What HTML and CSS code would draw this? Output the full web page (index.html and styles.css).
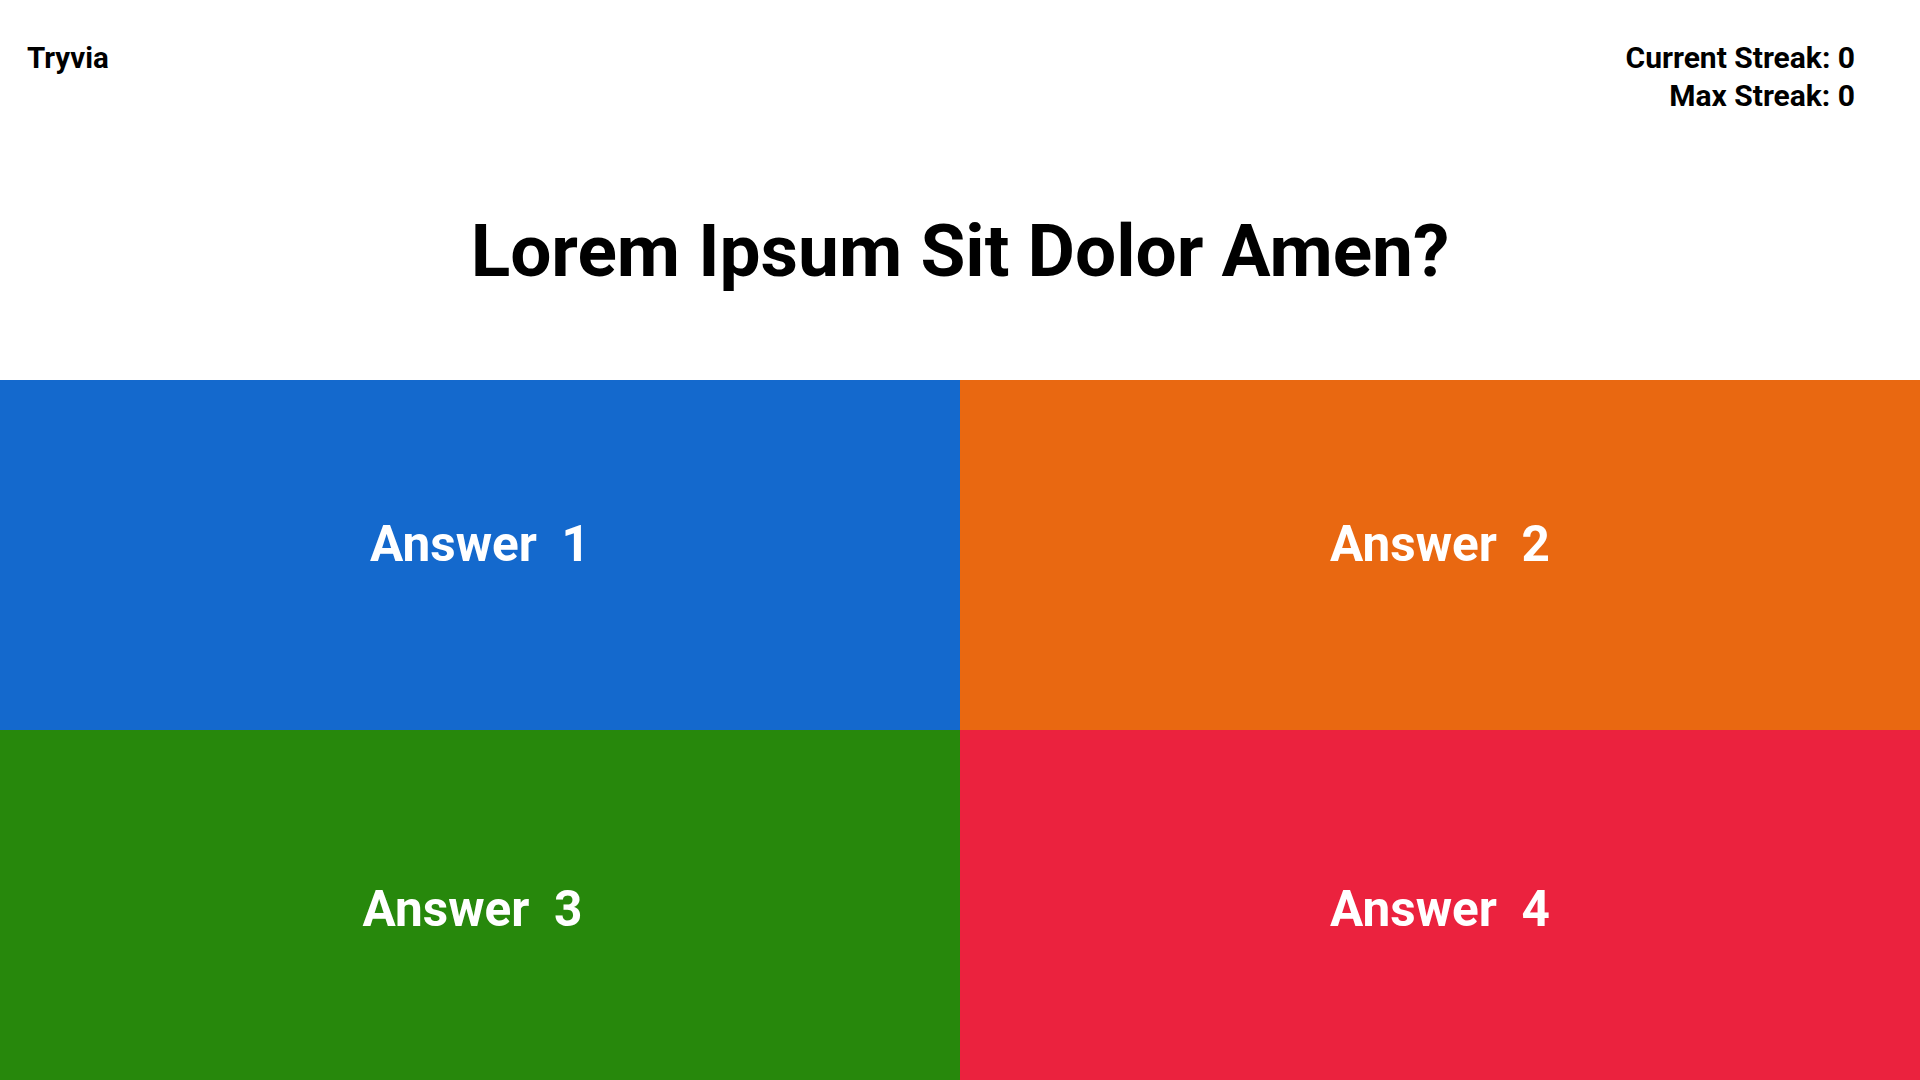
FILE: index.html
```html
<!DOCTYPE html>
<html lang="en">
<head>
<meta charset="utf-8">
<title>Tryvia</title>
<link rel="stylesheet" href="styles.css">
</head>
<body>
<div class="top">
  <header class="header">
    <div class="brand">Tryvia</div>
    <div class="streaks">
      <div class="streak">Current Streak: 0</div>
      <div class="streak">Max Streak: 0</div>
    </div>
  </header>
  <h1 class="question">Lorem Ipsum Sit Dolor Amen?</h1>
</div>
<main class="answers">
  <button class="answer answer-blue row-top">Answer  1</button>
  <button class="answer answer-orange row-top">Answer  2</button>
  <button class="answer answer-green row-bottom shift-left">Answer  3</button>
  <button class="answer answer-red row-bottom">Answer  4</button>
</main>
</body>
</html>
```
FILE: styles.css
```css
html, body {
  margin: 0;
  padding: 0;
  width: 1920px;
  height: 1080px;
  overflow: hidden;
  background: #ffffff;
  font-family: Roboto, "Liberation Sans", Arial, sans-serif;
  color: #000000;
}

.top {
  height: 380px;
  display: flex;
  flex-direction: column;
}

.header {
  display: flex;
  justify-content: space-between;
  align-items: flex-start;
  padding: 39px 65px 0 27px;
}

.brand {
  font-size: 29.5px;
  font-weight: 700;
  line-height: 38px;
}

.streaks {
  text-align: right;
  font-size: 30px;
  font-weight: 700;
  line-height: 38px;
}

.question {
  margin: 93px 0 0;
  text-align: center;
  font-size: 73px;
  font-weight: 700;
  line-height: normal;
}

.answers {
  display: grid;
  grid-template-columns: 1fr 1fr;
  grid-template-rows: 350px 350px;
}

.answer {
  border: none;
  margin: 0;
  display: flex;
  align-items: center;
  justify-content: center;
  font-family: Roboto, "Liberation Sans", Arial, sans-serif;
  font-size: 49.5px;
  font-weight: 700;
  color: #ffffff;
  white-space: pre;
  line-height: normal;
  cursor: pointer;
  padding: 0;
}

.row-top {
  padding-bottom: 23px;
}

.row-bottom {
  padding-top: 7px;
}

.shift-left {
  padding-right: 15px;
}

.answer-blue { background: #1469cd; }
.answer-orange { background: #e96811; }
.answer-green { background: #27880c; }
.answer-red { background: #eb223e; }
```
